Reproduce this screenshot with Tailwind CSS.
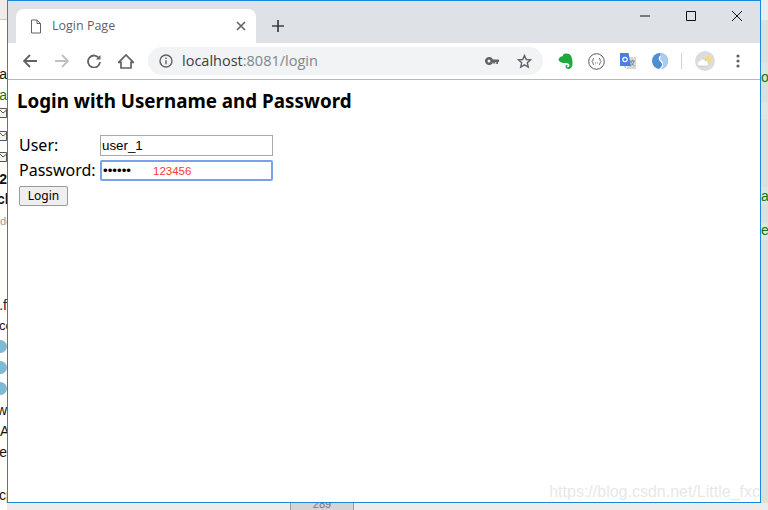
<!DOCTYPE html>
<html lang="en">
<head>
    <meta charset="UTF-8">
    <title>Login Page</title>
    <script src="https://cdn.jsdelivr.net/npm/@tailwindcss/browser@4"></script>
</head>
<body class="relative w-[768px] h-[510px] overflow-hidden bg-[#ececec] font-['Liberation_Sans',sans-serif]">
    <!-- Desktop behind the window -->
    <div class="absolute right-0 top-0 w-[8px] h-[503px] bg-[#d6e4da]">
        <div class="absolute top-0 left-0 w-full h-[20px] bg-[#ededed]"></div>
        <div class="absolute top-[62px] left-0 w-full h-[12px] bg-[#dfe6e1]"></div>
        <div class="absolute top-[102px] left-0 w-full h-[17px] bg-[#e2e6e3]"></div>
        <div class="absolute top-[187px] left-0 w-full h-[18px] bg-[#dfe6e1]"></div>
        <div class="absolute top-[222px] left-0 w-full h-[18px] bg-[#dfe6e1]"></div>
    </div>
    <div class="absolute left-[290px] top-[500px] w-[64px] h-[10px] bg-[#d4d4d4] border-x border-[#9a9a9a] text-[11px] leading-[8px] text-center text-[#777]">289</div>
    <div class="absolute left-0 top-0 w-[7px] h-[510px] overflow-hidden bg-white text-[14px] leading-[16px] text-[#111]">
        <div class="absolute left-0 top-0 w-full h-[20px] bg-[#ededed] border-b border-[#c8c8c8]"></div>
        <span class="absolute right-0 top-[66px]">a</span>
        <span class="absolute right-0 top-[87px] text-[#0a7a0a]">a</span>
        <svg class="absolute left-0 top-[108px] w-[7px] h-[10px]" viewBox="0 0 7 10" fill="#f8f3e2" stroke="#555"><path d="M-1 .5h7.500v9H-1zM0 2l3 3 3.500-3"/></svg>
        <svg class="absolute left-0 top-[131px] w-[7px] h-[10px]" viewBox="0 0 7 10" fill="#f8f3e2" stroke="#555"><path d="M-1 .5h7.500v9H-1zM0 2l3 3 3.500-3"/></svg>
        <svg class="absolute left-0 top-[152px] w-[7px] h-[10px]" viewBox="0 0 7 10" fill="#f8f3e2" stroke="#555"><path d="M-1 .5h7.500v9H-1zM0 2l3 3 3.500-3"/></svg>
        <span class="absolute right-0 top-[171px] font-bold">2</span>
        <span class="absolute -left-[3px] top-[191px] font-bold whitespace-nowrap">ch</span>
        <span class="absolute left-0 top-[213px] text-[11px] text-[#999] whitespace-nowrap">de</span>
        <span class="absolute right-0 top-[297px] whitespace-nowrap text-[#222]">a.f</span>
        <span class="absolute -left-[1px] top-[318px] text-[13px] whitespace-nowrap">co</span>
        <span class="absolute -left-[6px] top-[340px] w-[13px] h-[13px] rounded-full bg-[#7dbcd6] border-[3px] border-[#7dbcd6] ring-inset"></span>
        <span class="absolute -left-[6px] top-[361px] w-[13px] h-[13px] rounded-full bg-[#7dbcd6]"></span>
        <span class="absolute -left-[6px] top-[382px] w-[13px] h-[13px] rounded-full bg-[#7dbcd6]"></span>
        <span class="absolute right-0 top-[402px] whitespace-nowrap">w</span>
        <span class="absolute left-0 top-[423px] whitespace-nowrap">Ac</span>
        <span class="absolute right-0 top-[444px] whitespace-nowrap">e</span>
        <span class="absolute -left-[1px] top-[487px] whitespace-nowrap">cp</span>
    </div>
    <span class="absolute left-[761px] top-[69px] text-[14px] leading-[16px] text-[#0a7a0a]">o</span>
    <span class="absolute left-[761px] top-[188px] text-[14px] leading-[16px] text-[#0a7a0a]">a</span>
    <span class="absolute left-[761px] top-[222px] text-[14px] leading-[16px] text-[#0a7a0a]">e</span>

    <!-- Browser window -->
    <div class="absolute left-[7px] top-0 w-[754px] h-[503px] border border-[#1a86dc] bg-white flex flex-col">
        <!-- Tab strip -->
        <div class="h-[42px] bg-[#dee1e6] flex items-end pl-[8px] shrink-0 relative">
            <div class="w-[240px] h-[34px] bg-white rounded-t-[8px] flex items-center pl-[14px] pr-[10px]">
                <svg class="w-[12px] h-[15px] mr-[10px] shrink-0" viewBox="0 0 12 15" fill="none" stroke="#5f6368" stroke-width="1"><path d="M1.500 1h5.500l3.500 3.500V14h-9zM7 1v3.500h3.500"/></svg>
                <span class="text-[12.500px] text-[#5f6368] font-['Open_Sans',sans-serif] flex-1">Login Page</span>
                <svg class="w-[10px] h-[10px]" viewBox="0 0 10 10" stroke="#5f6368" stroke-width="1.600"><path d="M1 1l8 8M9 1l-8 8"/></svg>
            </div>
            <svg class="w-[12px] h-[12px] ml-[16px] mb-[11px]" viewBox="0 0 12 12" stroke="#3c4043" stroke-width="1.700"><path d="M6 0v12M0 6h12"/></svg>
            <div class="absolute top-[10px] left-[632px] flex items-start gap-[36px]">
                <svg class="w-[10px] h-[10px]" viewBox="0 0 10 10" stroke="#111" stroke-width="1"><path d="M0 5h10"/></svg>
                <svg class="w-[10px] h-[10px]" viewBox="0 0 10 10" stroke="#111" stroke-width="1" fill="none"><path d="M.5.5h9v9h-9z"/></svg>
                <svg class="w-[10px] h-[10px]" viewBox="0 0 10 10" stroke="#111" stroke-width="1"><path d="M0 0l10 10M10 0L0 10"/></svg>
            </div>
        </div>
        <!-- Toolbar -->
        <div class="h-[37px] bg-white border-b border-[#b9b9b9] flex items-center pl-[15px] shrink-0">
            <svg class="w-[14px] h-[14px] mr-[18px]" viewBox="0 0 14 14" fill="none" stroke="#5f6368" stroke-width="1.800"><path d="M14 7H1.500M7 1L1 7l6 6"/></svg>
            <svg class="w-[14px] h-[14px] mr-[18px]" viewBox="0 0 14 14" fill="none" stroke="#bdc1c6" stroke-width="1.800"><path d="M0 7h12.500M7 1l6 6-6 6"/></svg>
            <svg class="w-[14px] h-[14px] mr-[17px]" viewBox="0 0 14 14" fill="none" stroke="#5f6368" stroke-width="1.800"><path d="M12.200 4.500A6 6 0 1 0 13 8"/><path d="M13.500 1v4.600H8.900z" fill="#5f6368" stroke="none"/></svg>
            <svg class="w-[16px] h-[15px] mr-[14px]" viewBox="0 0 16 15" fill="none" stroke="#5f6368" stroke-width="1.700"><path d="M.6 8.300L8 1l7.400 7.300H13V14H3V8.300z"/></svg>
            <div class="w-[395px] h-[28px] rounded-[14px] bg-[#f1f3f4] flex items-center pl-[11px] pr-[11px]">
                <svg class="w-[14px] h-[14px] mr-[9px]" viewBox="0 0 14 14" fill="none" stroke="#5f6368" stroke-width="1.400"><circle cx="7" cy="7" r="6"/><path d="M7 6.200v4M7 3.500v1.500"/></svg>
                <span class="text-[14.500px] text-[#80868b] font-['Open_Sans',sans-serif] flex-1"><span class="text-[#3c4043]">localhost</span>:8081/login</span>
                <svg class="w-[14px] h-[8px] mr-[18px]" viewBox="0 0 14 8" fill="#5f6368"><path d="M4 0a4 4 0 1 1-3.800 5H.1a4 4 0 0 1 3.900-5zM4 2.500a1.500 1.500 0 1 0 0 3 1.500 1.500 0 0 0 0-3zM7.500 2.600H14V5h-1v2h-1.700V5h-1v1.500H8.200V5h-.7z"/></svg>
                <svg class="w-[15px] h-[15px]" viewBox="0 0 15 15" fill="none" stroke="#5f6368" stroke-width="1.400"><path d="M7.500 1.500l1.800 4 4.300.4-3.300 2.900 1 4.300-3.800-2.300-3.800 2.300 1-4.300L1.400 5.900l4.300-.4z"/></svg>
            </div>
            <!-- Extension icons -->
            <svg class="w-[15px] h-[17px] ml-[15px]" viewBox="0 0 15 17"><path d="M2 4l3-1V1.500C6.500 0 10 0 12 1.500c2 2 2.500 6 2.500 9 0 3-1.500 5.500-4 5.500-2 0-3-1-3-2.500s2-1.800 2.500-.8c-1-.2-1.500.5-1 1.200 1 .8 2.500 0 2.500-1.600 0-1.500-2-2.200-3.500-2.300C5 10 1 9.500 .5 6.500z" fill="#1fa83c"/></svg>
            <svg class="w-[17px] h-[17px] ml-[15px]" viewBox="0 0 17 17" fill="none" stroke="#555"><circle cx="8.500" cy="8.500" r="7.800"/><path d="M6 5.200C4.500 5.200 5.400 8 4 8.500c1.400.5.500 3.300 2 3.300M11 5.200c1.500 0 .6 2.800 2 3.300-1.400.5-.5 3.300-2 3.300" stroke-width=".9"/><path d="M7 10h.8M9.200 10h.8" stroke-width=".9"/></svg>
            <svg class="w-[16px] h-[17px] ml-[15px]" viewBox="0 0 16 17"><path d="M7 4h9v12H7z" fill="#d9d9d9"/><path d="M0 0h8.500l2.500 13H5l2 3-3-3H0z" fill="#4a7ee0"/><circle cx="5" cy="6.500" r="2.200" fill="none" stroke="#fff" stroke-width="1.200"/><path d="M10 8h5M12.500 7v1M11 8c.5 2.500 2 4 3.500 5M14 8c-.5 2.500-2 4-3.500 5" stroke="#777" fill="none" stroke-width=".8"/></svg>
            <svg class="w-[16px] h-[16px] ml-[16px]" viewBox="0 0 16 16"><circle cx="8" cy="8" r="8" fill="#4d8fd0"/><path d="M8 0a8 8 0 0 1 0 16c4-1.800 4.500-5 2-7-2-1.600-3.500-3-2-5.500.3-.8.6-2 0-3.500z" fill="#a9cdeb"/><path d="M8.500 3c-2 2-1.200 4 .7 5.500 2.500 2 2 5-1.200 7.500" fill="none" stroke="#fff" stroke-width="1.300"/></svg>
            <div class="w-px h-[16px] bg-[#d0d0d0] ml-[13px]"></div>
            <div class="w-[20px] h-[20px] rounded-full bg-[#dcdcdc] ml-[13px] flex items-center justify-center">
                <svg class="w-[15px] h-[12px]" viewBox="0 0 15 12"><circle cx="10" cy="4.500" r="3.500" fill="#f5dc83"/><path d="M1 11a2.500 2.500 0 0 1 .5-5C2 3.500 5.500 3 7 5.500c2-.5 3.500 1 3 2.500 1 .5 1 3-.5 3z" fill="#fff" stroke="#a9cdeb" stroke-width=".7"/></svg>
            </div>
            <svg class="w-[4px] h-[14px] ml-[21px]" viewBox="0 0 4 14" fill="#5f6368"><circle cx="2" cy="2" r="1.600"/><circle cx="2" cy="7" r="1.600"/><circle cx="2" cy="12" r="1.600"/></svg>
        </div>
        <!-- Page -->
        <div class="relative flex-1 pl-[9px] pt-[8px] text-black">
            <h1 class="text-[18.800px] leading-[26px] font-bold font-['Noto_Sans',sans-serif]">Login with Username and Password</h1>
            <form class="mt-[21px] pl-[2px] font-['Noto_Sans',sans-serif] text-[16px]">
                <div class="flex items-center h-[21px] mb-[4px]">
                    <label class="w-[81px] leading-[21px]">User:</label>
                    <input type="text" value="user_1" class="w-[173px] h-[21px] border border-[#a9a9a9] px-[1px] text-[13.333px] leading-[19px] font-['Liberation_Sans',sans-serif]">
                </div>
                <div class="flex items-center h-[21px] mb-[5px]">
                    <label class="w-[81px] leading-[21px]">Password:</label>
                    <div class="relative">
                        <input type="password" value="123456" class="block w-[173px] h-[21px] border-2 border-[#7ba0ec] rounded-[2px] px-[1px] text-[13.333px] font-['Liberation_Sans',sans-serif]">
                        <span class="absolute left-[53px] top-[4px] text-[11.500px] leading-[14px] text-[#f23b3b] font-['Liberation_Sans',sans-serif]">123456</span>
                    </div>
                </div>
                <button type="button" class="block w-[49px] h-[20px] bg-[#efefef] border border-[#9a9a9a] rounded-[2px] text-[12px] leading-[16px] font-['Noto_Sans',sans-serif]">Login</button>
            </form>
        </div>
    </div>
    <span class="absolute right-[8px] top-[483px] text-[16px] leading-[18px] text-[#e8e8e8]">https://blog.csdn.net/Little_fxc</span>
</body>
</html>
